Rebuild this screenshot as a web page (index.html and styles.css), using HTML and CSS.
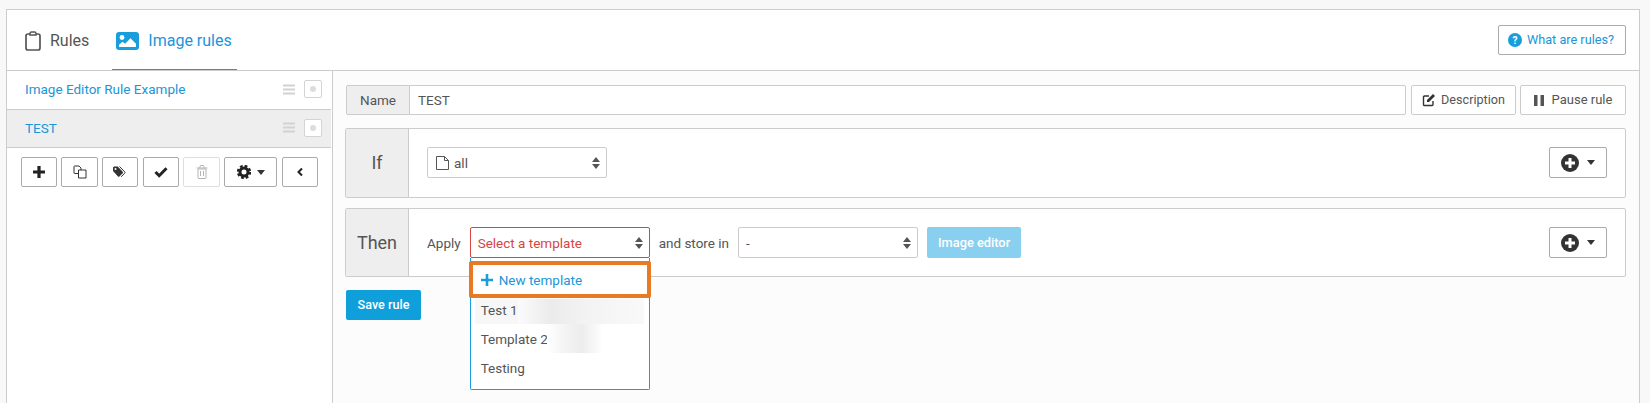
FILE: index.html
```html
<!DOCTYPE html>
<html lang="en">
<head>
<meta charset="utf-8">
<title>Image rules</title>
<link rel="stylesheet" href="styles.css">
</head>
<body>
<div class="panel">
  <header class="head">
    <nav class="tabs">
      <a class="tab">
        <svg class="ic-clip" viewBox="0 0 16 20" width="16" height="20"><rect x="1" y="3" width="14" height="16" rx="2" fill="none" stroke="#555" stroke-width="1.7"/><path d="M5 4V2.6C5 1.7 5.7 1 6.6 1h2.8c.9 0 1.6.7 1.6 1.6V4z" fill="#fff" stroke="#555" stroke-width="1.5"/></svg>
        <span>Rules</span>
      </a>
      <a class="tab active">
        <svg viewBox="0 0 23 18" width="23" height="18"><rect width="23" height="18" rx="3" fill="#189fdb"/><circle cx="6" cy="5.5" r="2.4" fill="#fff"/><path d="M3 15v-2.2l3.5-3 2.6 2 5.4-5.6 5.5 5.6V15z" fill="#fff"/></svg>
        <span>Image rules</span>
      </a>
    </nav>
    <button class="btn help"><svg viewBox="0 0 14 14" width="14" height="14"><circle cx="7" cy="7" r="7" fill="#189fdb"/><text x="7" y="10.6" text-anchor="middle" class="q">?</text></svg>What are rules?</button>
  </header>
  <div class="body">
    <aside class="side">
      <div class="rule">
        <span>Image Editor Rule Example</span>
        <svg class="burger" viewBox="0 0 12 11" width="12" height="11"><path d="M0 1.5h12M0 5.5h12M0 9.5h12" stroke="#d2d2d2" stroke-width="2"/></svg>
        <i class="toggle"><b></b></i>
      </div>
      <div class="rule current">
        <span>TEST</span>
        <svg class="burger" viewBox="0 0 12 11" width="12" height="11"><path d="M0 1.5h12M0 5.5h12M0 9.5h12" stroke="#d2d2d2" stroke-width="2"/></svg>
        <i class="toggle"><b></b></i>
      </div>
      <div class="tools">
        <button class="btn tool w36"><svg viewBox="0 0 14 14" width="14" height="14"><path d="M7 1v12M1 7h12" stroke="#222" stroke-width="3.2"/></svg></button>
        <button class="btn tool w37"><svg viewBox="0 0 14 14" width="14" height="14"><path d="M5.500 8.500H1.500a.5.500 0 0 1-.5-.5V1.500A.5.500 0 0 1 1.500 1H6l2 2v2" fill="none" stroke="#333"/><path d="M5.500 5h4L13 5v8H5.500z" fill="#fff" stroke="#333"/></svg></button>
        <button class="btn tool w36"><svg viewBox="0 0 14 12" width="14" height="12"><path d="M0 1.500V5l5 5.500a1 1 0 0 0 1.400 0l3.300-3.300a1 1 0 0 0 0-1.400L4.700.500H1z" fill="#333"/><path d="M6.500.5l5.200 5.300a1 1 0 0 1 0 1.400l-3.500 3.600" fill="none" stroke="#333"/><circle cx="2.500" cy="3" r="1" fill="#fff"/></svg></button>
        <button class="btn tool w36 wide-gap"><svg viewBox="0 0 14 12" width="14" height="12"><path d="M1.500 6l3.700 3.700 7.300-7.400" fill="none" stroke="#222" stroke-width="3"/></svg></button>
        <button class="btn tool w37 off"><svg viewBox="0 0 12 14" width="12" height="14"><path d="M2 4h8v8.500a1 1 0 0 1-1 1H3a1 1 0 0 1-1-1zM.5 3h11M4 3V1.500a1 1 0 0 1 1-1h2a1 1 0 0 1 1 1V3M4.500 6v5M7.500 6v5" fill="none" stroke="#b3b3b3"/></svg></button>
        <button class="btn tool w53"><svg viewBox="0 0 14 14" width="14" height="14"><circle cx="7" cy="7" r="4" fill="none" stroke="#222" stroke-width="3"/><circle cx="7" cy="7" r="6" fill="none" stroke="#222" stroke-width="2.400" stroke-dasharray="2.700 2"/></svg><i class="caret"></i></button>
        <button class="btn tool w36 wide-gap"><svg viewBox="0 0 8 10" width="8" height="10"><path d="M6 1.500L2.500 5 6 8.500" fill="none" stroke="#222" stroke-width="2"/></svg></button>
      </div>
    </aside>
    <main class="main">
      <div class="name-row">
        <div class="name-group">
          <label class="addon">Name</label>
          <div class="input">TEST</div>
        </div>
        <button class="btn act desc"><svg viewBox="0 0 14 14" width="14" height="14"><path d="M11 8v3.500a1 1 0 0 1-1 1H2.500a1 1 0 0 1-1-1V4a1 1 0 0 1 1-1H7" fill="none" stroke="#333" stroke-width="1.400"/><path d="M5 7l6-6 2 2-6 6H5z" fill="#333"/></svg>Description</button>
        <button class="btn act pause"><svg viewBox="0 0 10 13" width="10" height="13"><path d="M0 1h3.500v11H0zM6.500 1H10v11H6.500z" fill="#555"/></svg>Pause rule</button>
      </div>
      <section class="block if-block">
        <div class="key">If</div>
        <div class="content">
          <div class="select all">
            <svg viewBox="0 0 13 14" width="13" height="14"><path d="M.5.500h8l4 4v9H.5zM8.500.500v4h4" fill="none" stroke="#555"/></svg>
            <span>all</span>
            <svg class="updown" viewBox="0 0 8 12" width="8" height="12"><path d="M4 0l4 5H0zM4 12L0 7h8z" fill="#555"/></svg>
          </div>
          <button class="btn add"><svg viewBox="0 0 18 18" width="18" height="18"><circle cx="9" cy="9" r="9" fill="#333"/><path d="M9 4v10M4 9h10" stroke="#fff" stroke-width="3"/></svg><i class="caret"></i></button>
        </div>
      </section>
      <section class="block then-block">
        <div class="key">Then</div>
        <div class="content">
          <span class="word">Apply</span>
          <div class="select-wrap">
            <div class="select invalid">
              <span>Select a template</span>
              <svg class="updown" viewBox="0 0 8 12" width="8" height="12"><path d="M4 0l4 5H0zM4 12L0 7h8z" fill="#555"/></svg>
            </div>
            <div class="menu">
              <div class="new">
                <svg viewBox="0 0 12 12" width="12" height="12"><path d="M6 0v12M0 6h12" stroke="#189fdb" stroke-width="2.600"/></svg>
                <span>New template</span>
              </div>
              <div class="opt hover">Test 1<i class="smudge s1"></i></div>
              <div class="opt">Template 2<i class="smudge s2"></i></div>
              <div class="opt">Testing</div>
            </div>
          </div>
          <span class="word">and store in</span>
          <div class="select">
            <span>-</span>
            <svg class="updown" viewBox="0 0 8 12" width="8" height="12"><path d="M4 0l4 5H0zM4 12L0 7h8z" fill="#555"/></svg>
          </div>
          <button class="btn-fill editor">Image editor</button>
          <button class="btn add"><svg viewBox="0 0 18 18" width="18" height="18"><circle cx="9" cy="9" r="9" fill="#333"/><path d="M9 4v10M4 9h10" stroke="#fff" stroke-width="3"/></svg><i class="caret"></i></button>
        </div>
      </section>
      <button class="btn-fill save">Save rule</button>
    </main>
  </div>
</div>
</body>
</html>
```
FILE: styles.css
```css
* { box-sizing: border-box; }
html, body { height: 100%; }
body {
  margin: 0;
  padding: 9px 10px 0 6px;
  background: #f8f8f8;
  font: 13.5px/20px Roboto, "Liberation Sans", sans-serif;
  color: #555;
  overflow: hidden;
}
button { font: inherit; color: inherit; padding: 0; cursor: pointer; }
i { font-style: normal; }
svg { display: block; flex: none; }

.panel {
  height: 100%;
  display: flex;
  flex-direction: column;
  background: #fff;
  border: 1px solid #ccc;
  border-bottom: 0;
}
.head {
  height: 61px;
  flex: none;
  display: flex;
  align-items: flex-start;
  justify-content: space-between;
  padding: 15px 13px 0 18px;
  border-bottom: 1px solid #ccc;
}
.tabs { display: flex; gap: 23px; height: 45px; }
.tab {
  display: flex;
  align-items: center;
  gap: 9px;
  font-size: 16px;
  height: 45px;
  padding-bottom: 13px;
}
.tab.active {
  color: #2095d8;
  border-bottom: 1px solid #189fdb;
  padding: 0 5px 12px 4px;
}
.btn {
  display: inline-flex;
  align-items: center;
  justify-content: center;
  background: #fff;
  border: 1px solid #b5b5b5;
  border-radius: 2px;
}
.help {
  width: 128px;
  height: 30px;
  gap: 5px;
  padding-right: 2px;
  color: #2095d8;
  font-size: 12.7px;
  border-color: #aaa;
}
.q { font: 700 10px Roboto, sans-serif; fill: #fff; }

.body { flex: 1; display: flex; min-height: 0; }
.side { width: 326px; flex: none; border-right: 1px solid #ccc; }
.rule {
  display: flex;
  align-items: center;
  height: 39px;
  padding: 0 9px 2px 18px;
  color: #2095d8;
  border-bottom: 1px solid #ccc;
  margin-right: 1px;
}
.rule span { flex: 1; }
.rule.current { height: 38px; background: #eee; }
.burger { margin-right: 9px; }
.toggle {
  width: 18px;
  height: 18px;
  display: flex;
  align-items: center;
  justify-content: center;
  background: #fff;
  border: 1px solid #d4d4d4;
  border-radius: 2px;
}
.toggle b { width: 6px; height: 6px; border-radius: 50%; background: #ddd; }
.tools { display: flex; gap: 4px; padding: 9px 0 0 14px; }
.tool { height: 30px; gap: 6px; border-color: #aaa; }
.wide-gap { margin-left: 1px; }
.w36 { width: 36px; }
.w37 { width: 37px; }
.w53 { width: 53px; }
.off { border-color: #ddd; }
.caret {
  width: 0;
  height: 0;
  border: 4px solid transparent;
  border-top: 5px solid #333;
  border-bottom: 0;
}

.main {
  flex: 1;
  min-width: 0;
  background: #fcfcfc;
  padding: 14px 13px 0 12px;
}
.name-row { display: flex; height: 30px; padding-left: 1px; }
.name-group { flex: 1; display: flex; }
.addon {
  width: 64px;
  display: flex;
  align-items: center;
  justify-content: center;
  background: #eee;
  border: 1px solid #ccc;
  border-radius: 2px 0 0 2px;
}
.input {
  flex: 1;
  display: flex;
  align-items: center;
  padding-left: 8px;
  margin-left: -1px;
  background: #fff;
  border: 1px solid #ccc;
  border-radius: 0 2px 2px 0;
}
.act { height: 30px; gap: 5px; border-color: #ccc; font-size: 12.6px; }
.desc { width: 105px; margin-left: 5px; }
.pause { width: 106px; margin-left: 4px; gap: 8px; font-size: 13px; }

.block {
  display: flex;
  background: #fff;
  border: 1px solid #ccc;
  border-radius: 2px;
}
.if-block { height: 70px; margin-top: 13px; }
.then-block { height: 69px; margin-top: 10px; }
.key {
  width: 63px;
  flex: none;
  display: flex;
  align-items: center;
  justify-content: center;
  background: #eee;
  border-right: 1px solid #ccc;
  font-size: 18px;
}
.content {
  flex: 1;
  display: flex;
  align-items: center;
  padding: 0 18px;
}
.if-block .content { padding-bottom: 1px; }
.select {
  width: 180px;
  height: 31px;
  display: flex;
  align-items: center;
  gap: 6px;
  padding: 0 6px 0 7px;
  background: #fff;
  border: 1px solid #ccc;
  border-radius: 2px;
}
.select.all { gap: 5px; padding-left: 8px; }
.select span { flex: 1; }
.select.invalid { border-color: #d64541; color: #d64541; }
.word { margin-right: 9px; }
.select-wrap { position: relative; margin-right: 9px; }
.btn-fill {
  border: 0;
  border-radius: 2px;
  color: #fff;
  font-weight: 500;
  font-size: 12.8px;
}
.editor { width: 94px; height: 31px; margin-left: 9px; background: #89cfef; }
.add { width: 58px; height: 31px; margin-left: auto; gap: 8px; border-color: #aaa; }
.save { display: block; width: 75px; height: 30px; margin: 13px 0 0 1px; background: #0f9fdb; font-size: 12.6px; }

.menu {
  position: absolute;
  top: 31px;
  left: 0;
  width: 180px;
  height: 132px;
  padding: 0 5px 0 4px;
  background: #fff;
  border: 1px solid #189fdb;
  border-top: 0;
  border-radius: 0 0 2px 2px;
  z-index: 2;
}
.new {
  display: flex;
  align-items: center;
  gap: 6px;
  margin: 3px -7px 1px -6px;
  height: 37px;
  padding-left: 8px;
  color: #2095d8;
  background: #fff;
  border: 4px solid #e87a24;
  border-radius: 2px;
}
.opt {
  position: relative;
  height: 29px;
  padding-left: 6px;
  display: flex;
  align-items: center;
}
.opt.hover { height: 25px; padding-bottom: 3px; background: #f7f7f7; }
.smudge { position: absolute; top: 0; bottom: 0; }
.s1 {
  left: 43px;
  right: 0;
  background: linear-gradient(90deg, #fbfbfb, #ebebeb 26%, #f3f3f3 55%, #f9f9f9);
}
.s2 {
  left: 72px;
  width: 56px;
  background: linear-gradient(90deg, #fff, #f4f4f4 30%, #ececec 62%, #fff);
}
```
